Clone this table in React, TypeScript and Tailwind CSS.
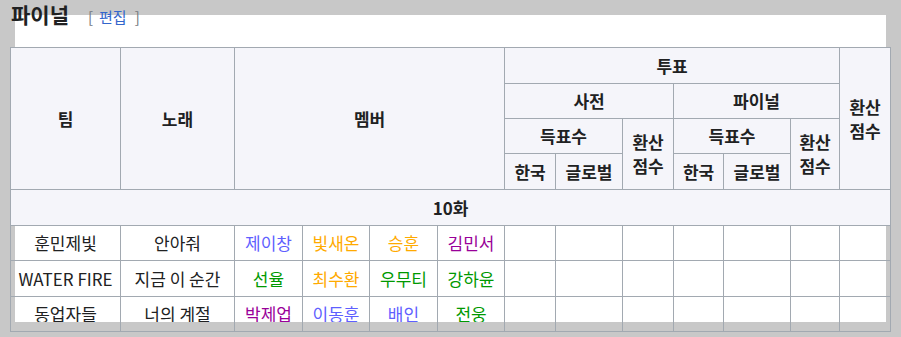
import React from 'react';

type Member = { name: string; color: string };

interface TeamRow {
  team: string;
  song: string;
  members: Member[];
}

const BLUE = 'text-[#5f5fff]';
const ORANGE = 'text-[#ffaa00]';
const PURPLE = 'text-[#990099]';
const GREEN = 'text-[#009900]';

const rows: TeamRow[] = [
  {
    team: '훈민제빛',
    song: '안아줘',
    members: [
      { name: '제이창', color: BLUE },
      { name: '빛새온', color: ORANGE },
      { name: '승훈', color: ORANGE },
      { name: '김민서', color: PURPLE },
    ],
  },
  {
    team: 'WATER FIRE',
    song: '지금 이 순간',
    members: [
      { name: '선율', color: GREEN },
      { name: '최수환', color: ORANGE },
      { name: '우무티', color: GREEN },
      { name: '강하윤', color: GREEN },
    ],
  },
  {
    team: '동업자들',
    song: '너의 계절',
    members: [
      { name: '박제업', color: PURPLE },
      { name: '이동훈', color: BLUE },
      { name: '배인', color: BLUE },
      { name: '전웅', color: GREEN },
    ],
  },
];

// column widths: team, song, 4 members, 사전(한국, 글로벌, 환산), 파이널(한국, 글로벌, 환산), 환산점수
const colClasses = [
  'w-[110px]',
  'w-[114px]',
  'w-[68px]',
  'w-[67px]',
  'w-[68px]',
  'w-[67px]',
  'w-[51px]',
  'w-[67px]',
  'w-[51px]',
  'w-[50px]',
  'w-[67px]',
  'w-[49px]',
  'w-[51px]',
];

const th = 'border border-[#a2a9b1] bg-[#f5f5fa] font-bold text-center align-middle px-0 leading-[24px]';
const td = 'border border-[#a2a9b1] text-center align-middle px-0 leading-[24px] whitespace-nowrap';

export default function App() {
  return (
    <div className="h-[337px] overflow-hidden bg-[#c8c8c8] bg-[linear-gradient(#ffffff,#ffffff)] bg-no-repeat bg-[length:871px_307px] bg-[position:15px_15px] text-[#202122] font-['Noto_Sans_CJK_KR','Noto_Sans',sans-serif]">
      {/* Heading */}
      <div className="flex items-baseline ml-[11px] h-[30px]">
        <h2 className="text-[21px] leading-[28px] font-bold">파이널</h2>
        <span className="ml-[19px] text-[15px] text-[#72777d] flex items-baseline">
          <span>[</span>
          <span className="ml-[6px] text-[#3366cc]">편집</span>
          <span className="ml-[8px]">]</span>
        </span>
      </div>

      {/* Table */}
      <table className="mt-[17px] ml-[10px] w-[880px] table-fixed border-collapse text-[17px]">
        <colgroup>
          {colClasses.map((c, i) => (
            <col key={i} className={c} />
          ))}
        </colgroup>
        <thead>
          <tr className="h-[36px]">
            <th rowSpan={4} className={th}>팀</th>
            <th rowSpan={4} className={th}>노래</th>
            <th rowSpan={4} colSpan={4} className={th}>멤버</th>
            <th colSpan={6} className={th}>투표</th>
            <th rowSpan={4} className={th}>
              환산
              <br />
              점수
            </th>
          </tr>
          <tr className="h-[35px]">
            <th colSpan={3} className={th}>사전</th>
            <th colSpan={3} className={th}>파이널</th>
          </tr>
          <tr className="h-[35px]">
            <th colSpan={2} className={th}>득표수</th>
            <th rowSpan={2} className={th}>
              환산
              <br />
              점수
            </th>
            <th colSpan={2} className={th}>득표수</th>
            <th rowSpan={2} className={th}>
              환산
              <br />
              점수
            </th>
          </tr>
          <tr className="h-[36px]">
            <th className={th}>한국</th>
            <th className={th}>글로벌</th>
            <th className={th}>한국</th>
            <th className={th}>글로벌</th>
          </tr>
        </thead>
        <tbody>
          <tr className="h-[36px]">
            <th colSpan={13} className={th}>10화</th>
          </tr>
          {rows.map((row, r) => {
            const last = r === rows.length - 1;
            const cell = last ? `${td} !align-top pt-[5px]` : td;
            // the last row is cut off where the white panel ends
            const wrap = (content: React.ReactNode) =>
              last ? <div className="h-[20px] overflow-hidden">{content}</div> : content;
            return (
              <tr key={row.team} className={r === 1 ? 'h-[36px]' : 'h-[35px]'}>
                <td className={cell}>{wrap(row.team)}</td>
                <td className={cell}>{wrap(row.song)}</td>
                {row.members.map((m) => (
                  <td key={m.name} className={`${cell} ${m.color}`}>
                    {wrap(m.name)}
                  </td>
                ))}
                {Array.from({ length: 7 }).map((_, i) => (
                  <td key={i} className={cell} />
                ))}
              </tr>
            );
          })}
        </tbody>
      </table>
    </div>
  );
}
